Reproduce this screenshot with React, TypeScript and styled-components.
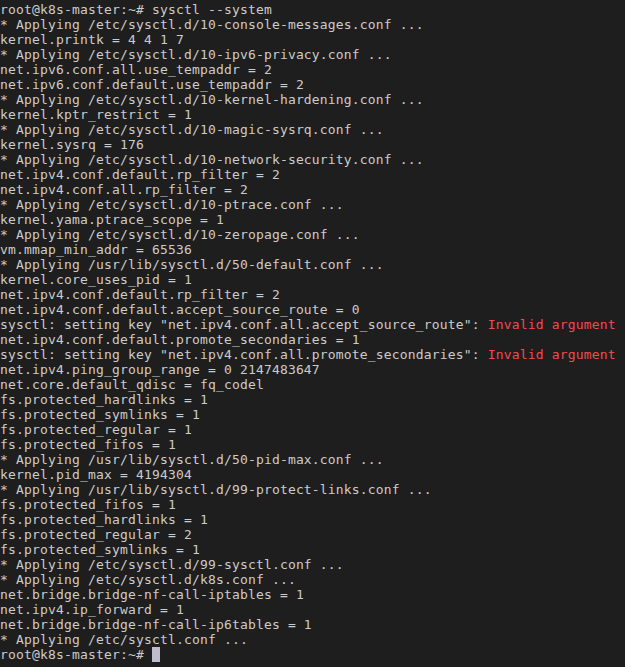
import React from "react";
import styled, { createGlobalStyle } from "styled-components";

const Global = createGlobalStyle`
  html, body { margin: 0; padding: 0; background: #1e1e1e; }
  #root { min-height: 100vh; }
`;

const Terminal = styled.div`
  width: 625px;
  height: 667px;
  box-sizing: border-box;
  padding: 2px 0 0 0;
  background: #1e1e1e;
  color: #cccccc;
  font-family: "DejaVu Sans Mono", "Liberation Mono", monospace;
  font-size: 13px;
  letter-spacing: 0.17px;
  overflow: hidden;
`;

const Line = styled.div`
  height: 15px;
  line-height: 15px;
  white-space: pre;
  display: flex;
  align-items: center;
`;

const Err = styled.span`
  color: #f14c4c;
`;

const Cursor = styled.span`
  display: inline-block;
  width: 8px;
  height: 15px;
  background: #bdbdcc;
`;

const lines: string[] = [
  "* Applying /etc/sysctl.d/10-console-messages.conf ...",
  "kernel.printk = 4 4 1 7",
  "* Applying /etc/sysctl.d/10-ipv6-privacy.conf ...",
  "net.ipv6.conf.all.use_tempaddr = 2",
  "net.ipv6.conf.default.use_tempaddr = 2",
  "* Applying /etc/sysctl.d/10-kernel-hardening.conf ...",
  "kernel.kptr_restrict = 1",
  "* Applying /etc/sysctl.d/10-magic-sysrq.conf ...",
  "kernel.sysrq = 176",
  "* Applying /etc/sysctl.d/10-network-security.conf ...",
  "net.ipv4.conf.default.rp_filter = 2",
  "net.ipv4.conf.all.rp_filter = 2",
  "* Applying /etc/sysctl.d/10-ptrace.conf ...",
  "kernel.yama.ptrace_scope = 1",
  "* Applying /etc/sysctl.d/10-zeropage.conf ...",
  "vm.mmap_min_addr = 65536",
  "* Applying /usr/lib/sysctl.d/50-default.conf ...",
  "kernel.core_uses_pid = 1",
  "net.ipv4.conf.default.rp_filter = 2",
  "net.ipv4.conf.default.accept_source_route = 0",
  "ERR:sysctl: setting key \"net.ipv4.conf.all.accept_source_route\": ",
  "net.ipv4.conf.default.promote_secondaries = 1",
  "ERR:sysctl: setting key \"net.ipv4.conf.all.promote_secondaries\": ",
  "net.ipv4.ping_group_range = 0 2147483647",
  "net.core.default_qdisc = fq_codel",
  "fs.protected_hardlinks = 1",
  "fs.protected_symlinks = 1",
  "fs.protected_regular = 1",
  "fs.protected_fifos = 1",
  "* Applying /usr/lib/sysctl.d/50-pid-max.conf ...",
  "kernel.pid_max = 4194304",
  "* Applying /usr/lib/sysctl.d/99-protect-links.conf ...",
  "fs.protected_fifos = 1",
  "fs.protected_hardlinks = 1",
  "fs.protected_regular = 2",
  "fs.protected_symlinks = 1",
  "* Applying /etc/sysctl.d/99-sysctl.conf ...",
  "* Applying /etc/sysctl.d/k8s.conf ...",
  "net.bridge.bridge-nf-call-iptables = 1",
  "net.ipv4.ip_forward = 1",
  "net.bridge.bridge-nf-call-ip6tables = 1",
  "* Applying /etc/sysctl.conf ...",
];

export default function App() {
  return (
    <>
      <Global />
      <Terminal>
        <Line>root@k8s-master:~# sysctl --system</Line>
        {lines.map((l, i) =>
          l.startsWith("ERR:") ? (
            <Line key={i}>
              {l.slice(4)}
              <Err>Invalid argument</Err>
            </Line>
          ) : (
            <Line key={i}>{l}</Line>
          )
        )}
        <Line>
          {"root@k8s-master:~# "}
          <Cursor />
        </Line>
      </Terminal>
    </>
  );
}
